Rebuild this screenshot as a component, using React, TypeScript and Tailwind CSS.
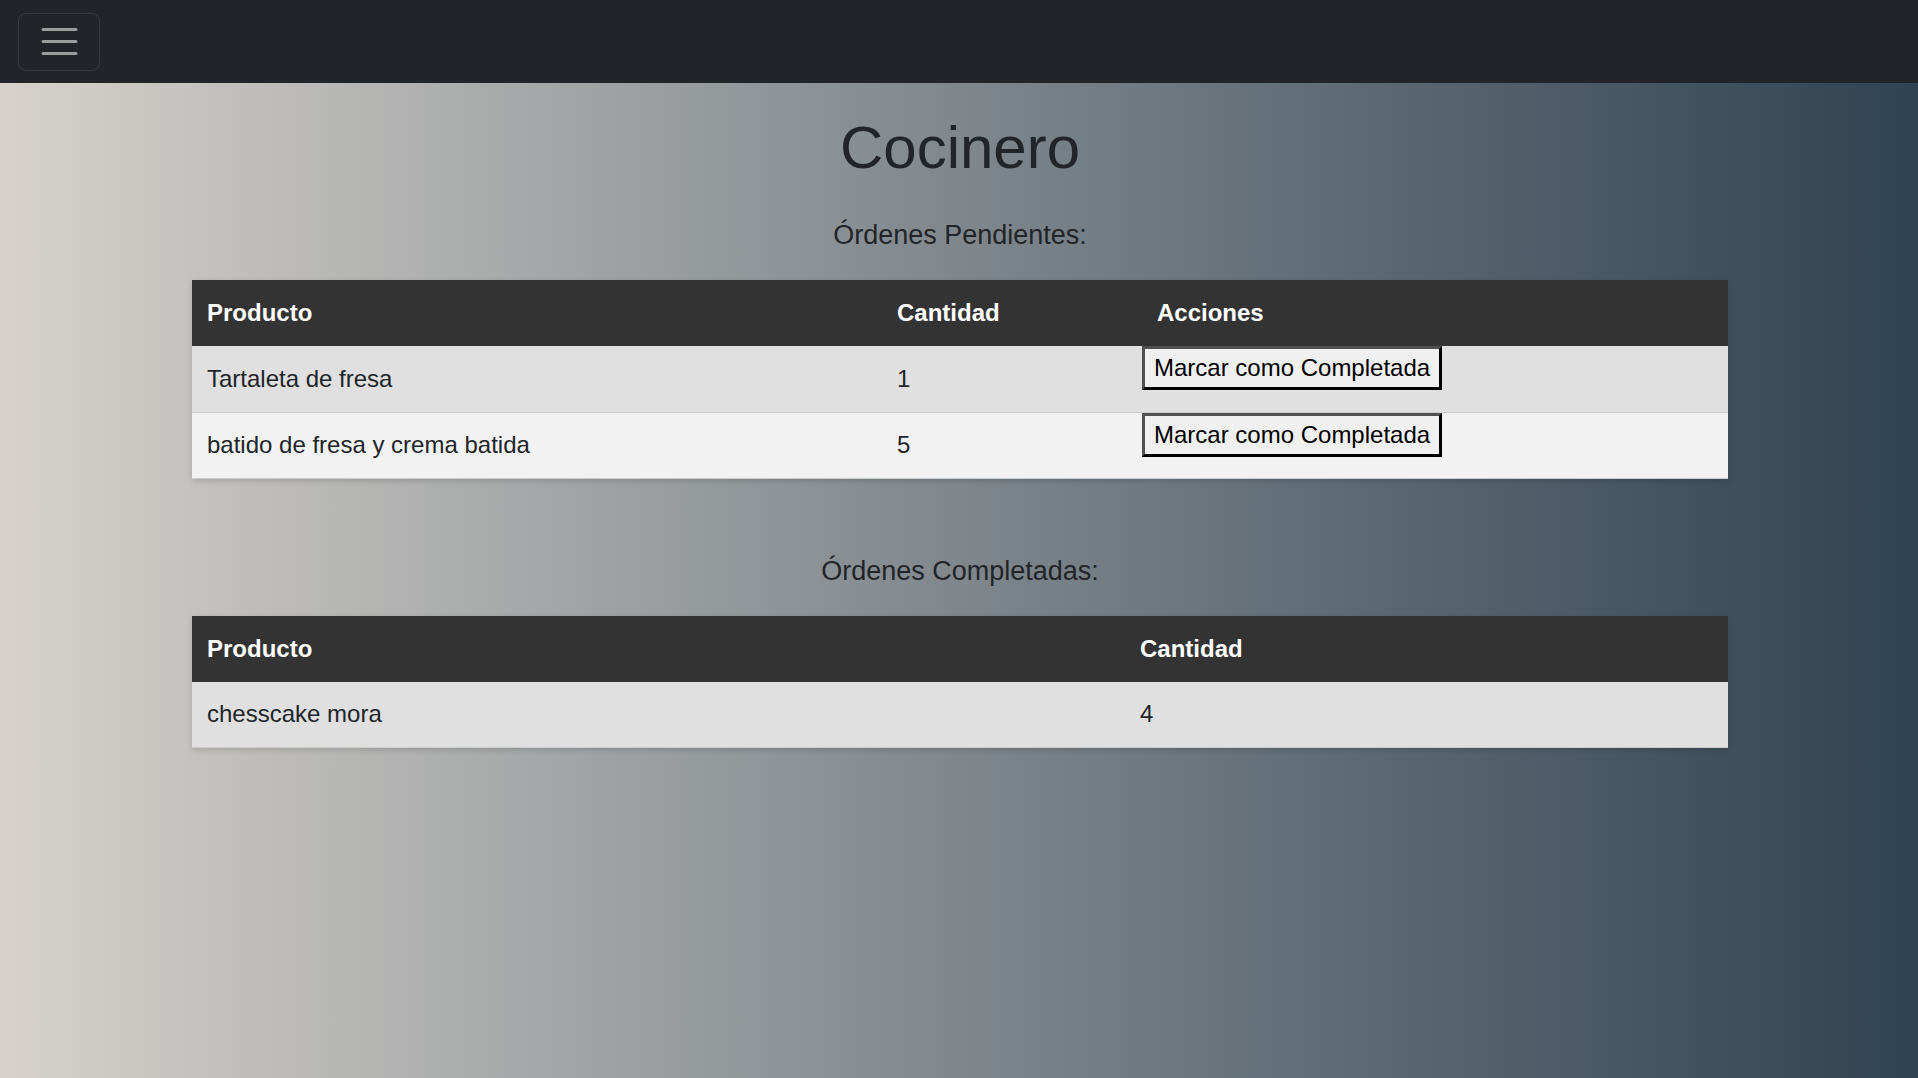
const pendientes = [
  { producto: 'Tartaleta de fresa', cantidad: 1 },
  { producto: 'batido de fresa y crema batida', cantidad: 5 },
];

const completadas = [{ producto: 'chesscake mora', cantidad: 4 }];

function Navbar() {
  return (
    <nav className="h-[83px] bg-[#212529] flex items-center px-[18px]">
      <button className="w-[82px] h-[58px] rounded-[8px] border border-[rgba(255,255,255,0.1)] flex items-center justify-center">
        <svg width="45" height="45" viewBox="0 0 30 30" fill="none">
          <path
            d="M4 7h22M4 15h22M4 23h22"
            stroke="rgba(255,255,255,0.55)"
            strokeWidth="2"
            strokeLinecap="round"
          />
        </svg>
      </button>
    </nav>
  );
}

function Heading({ children }: { children: React.ReactNode }) {
  return <p className="text-center text-[27px] leading-[40px] text-[#212529] mb-[25px]">{children}</p>;
}

export default function App() {
  return (
    <div className="min-h-screen bg-linear-to-r from-[#d7d2cc] to-[#304352] font-['Liberation_Sans',Arial,sans-serif] text-[#212529]">
      <Navbar />

      <main className="w-[1536px] ml-[192px] pt-[29px]">
        <h1 className="text-center text-[60px] leading-[72px] font-normal mb-[31px]">Cocinero</h1>

        <Heading>Órdenes Pendientes:</Heading>
        <table className="w-full border-collapse text-[24px] shadow-[0_2px_6px_rgba(0,0,0,0.15)]">
          <colgroup>
            <col className="w-[690px]" />
            <col className="w-[260px]" />
            <col className="w-[586px]" />
          </colgroup>
          <thead>
            <tr className="h-[66px] bg-[#333333] text-white">
              <th className="text-left font-bold px-[15px]">Producto</th>
              <th className="text-left font-bold px-[15px]">Cantidad</th>
              <th className="text-left font-bold px-[15px]">Acciones</th>
            </tr>
          </thead>
          <tbody>
            {pendientes.map((o, i) => (
              <tr key={o.producto} className={`h-[66px] ${i % 2 === 0 ? 'bg-[#e0e0e0]' : 'bg-[#f2f2f2]'}`}>
                <td className="px-[15px] border-b border-[#cccccc]">{o.producto}</td>
                <td className="px-[15px] border-b border-[#cccccc]">{o.cantidad}</td>
                <td className="p-0 align-top border-b border-[#cccccc]">
                  <button className="block bg-[#f0f0f0] text-black text-[24px] leading-[36px] px-[9px] py-px border-[3px] border-solid border-t-[#505050] border-l-[#505050] border-r-black border-b-black">
                    Marcar como Completada
                  </button>
                </td>
              </tr>
            ))}
          </tbody>
        </table>

        <div className="h-[72px]" />

        <Heading>Órdenes Completadas:</Heading>
        <table className="w-full border-collapse text-[24px] shadow-[0_2px_6px_rgba(0,0,0,0.15)]">
          <colgroup>
            <col className="w-[933px]" />
            <col className="w-[603px]" />
          </colgroup>
          <thead>
            <tr className="h-[66px] bg-[#333333] text-white">
              <th className="text-left font-bold px-[15px]">Producto</th>
              <th className="text-left font-bold px-[15px]">Cantidad</th>
            </tr>
          </thead>
          <tbody>
            {completadas.map((o) => (
              <tr key={o.producto} className="h-[66px] bg-[#e0e0e0]">
                <td className="px-[15px] border-b border-[#cccccc]">{o.producto}</td>
                <td className="px-[15px] border-b border-[#cccccc]">{o.cantidad}</td>
              </tr>
            ))}
          </tbody>
        </table>
      </main>
    </div>
  );
}
